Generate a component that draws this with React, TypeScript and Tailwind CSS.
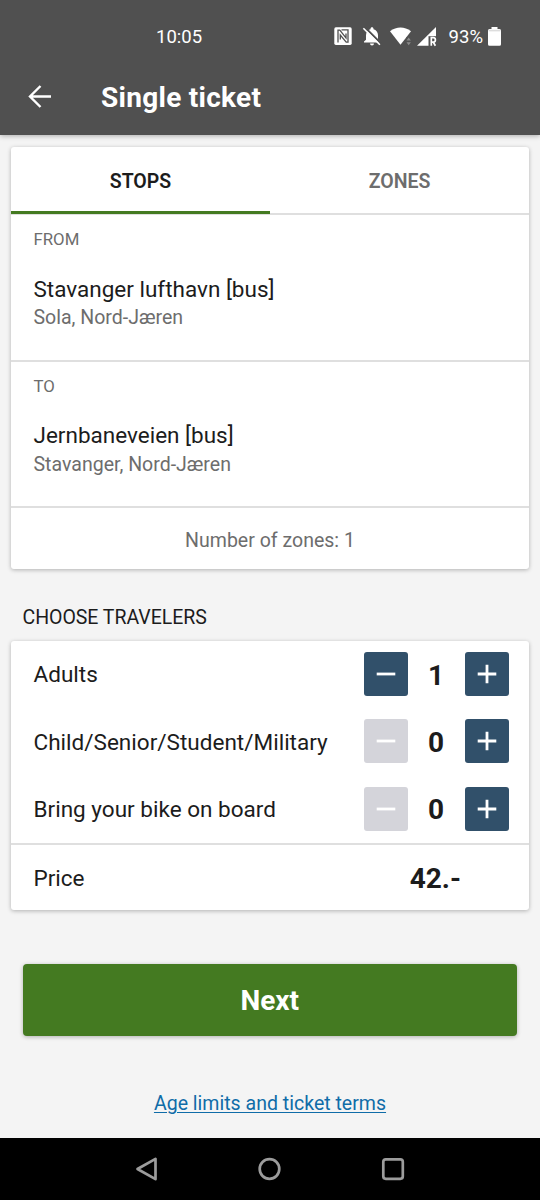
import React from "react";

function StatusIcons() {
  return (
    <svg width="172" height="24" viewBox="0 0 172 24" className="block">
      <rect x="4.3" y="3.3" width="17.4" height="17.6" rx="1.6" fill="#fff" />
      <path d="M8 18.500V6.200h1.800l6.200 7.600V9.500M11.500 5.800h6.500v12.300h-1.800L10.300 11v4.500" fill="none" stroke="#505050" strokeWidth="1.300" />
      <path
        d="M42 3.200c.9 0 1.500.7 1.500 1.600v.5c2.800.7 4.500 3 4.500 6v4.400l2 1.900v1H34v-1l2-1.900v-4.400c0-3 1.700-5.300 4.500-6v-.5c0-.9.6-1.600 1.500-1.600zM40 19.500h4a2 2 0 0 1-4 0z"
        fill="#fff"
      />
      <path d="M34.600 3l16 16" stroke="#505050" strokeWidth="1.800" />
      <path d="M33.400 4.200l16.500 16.500" stroke="#fff" strokeWidth="1.600" />
      <path d="M60 7.200Q65 3.600 70.500 3.600T81 7.200L70.500 20.800z" fill="#fff" />
      <path d="M76 13.500h6v8h-6z" fill="#505050" />
      <path d="M76.500 16.500l2.200-3 2.200 3zM76.500 18.200l2.200 3 2.200-3z" fill="#8a8a8a" />
      <path d="M87 21.700L106 3v18.700z" fill="#fff" />
      <path d="M98.500 12.200h8v10h-8z" fill="#505050" />
      <path d="M101.300 21.700v-8h1.900a2.200 2.200 0 0 1 0 4.400h-1.900M103.200 18l2.200 3.700" fill="none" stroke="#fff" strokeWidth="1.700" />
      <text x="118.500" y="19" fontFamily="Roboto, sans-serif" fontSize="18.500" fontWeight="400" letterSpacing="0.1" fill="#fff">93%</text>
      <path d="M161.500 3h6v2h2q1.500 0 1.500 1.500v13.700q0 1.500-1.500 1.500h-10q-1.500 0-1.500-1.500V6.500q0-1.500 1.500-1.500h2z" fill="#fff" />
      <path d="M158.500 6.600h12" stroke="#ddd" strokeWidth="1.600" />
    </svg>
  );
}

function Step({ plus, disabled }: { plus?: boolean; disabled?: boolean }) {
  return (
    <button
      className={`flex h-11 w-11 items-center justify-center rounded-[3px] ${disabled ? "bg-[#d4d4da]" : "bg-[#31506a]"}`}
    >
      <svg width="44" height="44" viewBox="0 0 44 44" fill="none" stroke="#fff" strokeWidth="2.800">
        <path d={plus ? "M12.700 22h18.600M22 12.700v18.600" : "M12.700 22h18.600"} />
      </svg>
    </button>
  );
}

function Traveler({ label, count }: { label: string; count: number }) {
  return (
    <div className="flex h-[67.400px] items-center pr-[20.400px] pb-[1.800px] pl-[22.500px]">
      <span className="flex-1 pt-[3px] text-[22.540px] whitespace-nowrap">{label}</span>
      <Step disabled={count === 0} />
      <span className="w-[57px] pt-[3.500px] text-center text-[28px] leading-8 font-bold">{count}</span>
      <Step plus />
    </div>
  );
}

function Stop({ label, name, area }: { label: string; name: string; area: string }) {
  return (
    <section className="h-[146.500px] border-b-2 border-[#dfdfdf] pt-[12.900px] pl-[22.500px]">
      <h2 className="text-[16.800px] leading-[22px] text-[#6d6d6d]">{label}</h2>
      <p className="mt-[23.300px] text-[22.500px] leading-[30px]">{name}</p>
      <p className="mt-[0.600px] text-[19.550px] leading-[28px] text-[#6d6d6d]">{area}</p>
    </section>
  );
}

export default function App() {
  return (
    <div className="flex h-[1200px] w-[540px] flex-col overflow-hidden bg-[#f4f4f4] font-['Roboto',sans-serif] text-[#1c1c1c]">
      <header className="relative h-[135px] shrink-0 bg-[#505050] text-white shadow-[0_1px_5px_rgba(0,0,0,0.3)]">
        <div className="flex h-[60px] items-start pt-[24px]">
          <span className="ml-[156px] w-[174px] text-[18.500px] leading-[26px]">10:05</span>
          <StatusIcons />
        </div>
        <div className="flex h-[75px] items-center">
          <svg width="24" height="24" viewBox="0 0 24 24" className="-mt-[2px] ml-[28px]" fill="none" stroke="#fff" strokeWidth="2.400">
            <path d="M23 11.500H2M12.500 1L2 11.500 12.500 22" />
          </svg>
          <h1 className="ml-[49px] text-[28px] leading-9 font-bold tracking-[0.280px]">Single ticket</h1>
        </div>
      </header>

      <main className="flex flex-1 flex-col px-[11px] pt-3">
        <div className="h-[422px] rounded-[3px] bg-white shadow-[0_1px_4px_rgba(0,0,0,0.280)]">
          <div className="flex h-[68.400px] border-b-2 border-[#dfdfdf] text-[19.500px] font-semibold">
            <button className="mb-[-1px] h-[67px] w-[259px] border-b-[3px] border-[#447a21] pt-[5px]">STOPS</button>
            <button className="flex-1 pt-[3px] text-[#6d6d6d]">ZONES</button>
          </div>
          <Stop label="FROM" name="Stavanger lufthavn [bus]" area="Sola, Nord-Jæren" />
          <Stop label="TO" name="Jernbaneveien [bus]" area="Stavanger, Nord-Jæren" />
          <p className="pt-[18.600px] text-center text-[19.550px] leading-[28px] text-[#6d6d6d]">Number of zones: 1</p>
        </div>

        <h2 className="mt-[35px] ml-[11.500px] text-[19.500px] leading-[28px] tracking-[-0.030px]">CHOOSE TRAVELERS</h2>
        <div className="mt-[9px] h-[269px] rounded-[3px] bg-white shadow-[0_1px_4px_rgba(0,0,0,0.280)]">
          <Traveler label="Adults" count={1} />
          <Traveler label="Child/Senior/Student/Military" count={0} />
          <Traveler label="Bring your bike on board" count={0} />
          <div className="flex h-[67px] items-center border-t-2 border-[#dfdfdf] pt-[2px] pr-[68px] pl-[22.500px]">
            <span className="flex-1 text-[22.500px]">Price</span>
            <span className="text-[28px] font-bold">42.-</span>
          </div>
        </div>

        <button className="mr-[12px] ml-[11.500px] mt-[53.500px] h-[72px] rounded-[4px] bg-[#447a21] pt-[3px] text-[28px] font-bold text-white shadow-[0_1px_4px_rgba(0,0,0,0.280)]">
          Next
        </button>
        <a href="#terms" className="mt-[54.500px] self-center text-[19.550px] leading-[28px] text-[#0f6ca8] underline decoration-[1.300px] underline-offset-[2px]">
          Age limits and ticket terms
        </a>
      </main>

      <nav className="h-[62px] shrink-0 bg-black">
        <svg width="540" height="62" viewBox="0 0 540 62" fill="none" stroke="#9c9c9c" strokeWidth="2.700" strokeLinejoin="round">
          <path d="M137.500 31l18-10.200v20.400z" />
          <circle cx="269.500" cy="31" r="9.800" />
          <rect x="383.300" y="21.300" width="19.500" height="19.500" rx="2.500" />
        </svg>
      </nav>
    </div>
  );
}
